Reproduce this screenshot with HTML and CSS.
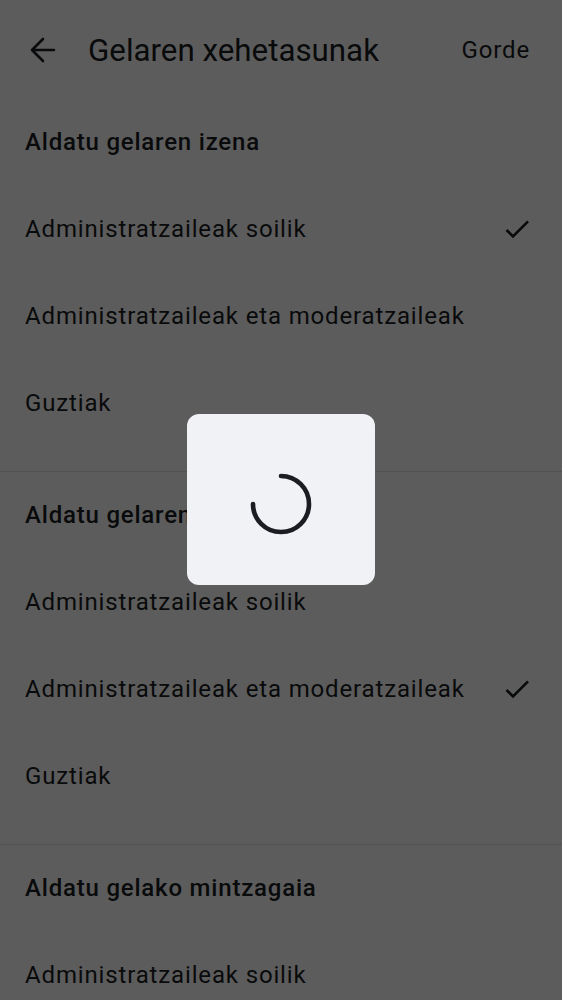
FILE: index.html
```html
<!DOCTYPE html>
<html lang="eu">
<head>
<meta charset="utf-8">
<title>Gelaren xehetasunak</title>
<link rel="stylesheet" href="styles.css">
</head>
<body>
<div class="page">
  <header class="appbar">
    <button class="back" aria-label="Atzera">
      <svg width="28" height="28" viewBox="0 0 28 28" fill="none" stroke="#1b1d22" stroke-width="2.6" stroke-linecap="round" stroke-linejoin="round"><path d="M25 14H3M14 3L3 14l11 11"/></svg>
    </button>
    <h1 class="title">Gelaren xehetasunak</h1>
    <span class="save">Gorde</span>
  </header>

  <section class="section">
    <div class="sec-head">Aldatu gelaren izena</div>
    <div class="item"><span>Administratzaileak soilik</span><svg class="check" width="32" height="32" viewBox="0 0 24 24"><path fill="#1b1d22" d="M9 16.17L4.83 12l-1.42 1.41L9 19 21 7l-1.41-1.41z"/></svg></div>
    <div class="item"><span>Administratzaileak eta moderatzaileak</span></div>
    <div class="item"><span>Guztiak</span></div>
  </section>
  <section class="section">
    <div class="sec-head">Aldatu gelaren irudia</div>
    <div class="item"><span>Administratzaileak soilik</span></div>
    <div class="item"><span>Administratzaileak eta moderatzaileak</span><svg class="check" width="32" height="32" viewBox="0 0 24 24"><path fill="#1b1d22" d="M9 16.17L4.83 12l-1.42 1.41L9 19 21 7l-1.41-1.41z"/></svg></div>
    <div class="item"><span>Guztiak</span></div>
  </section>
  <section class="section">
    <div class="sec-head">Aldatu gelako mintzagaia</div>
    <div class="item"><span>Administratzaileak soilik</span></div>
    <div class="item"><span>Administratzaileak eta moderatzaileak</span></div>
    <div class="item"><span>Guztiak</span></div>
  </section>
</div>

<div class="scrim"></div>
<div class="progress" role="progressbar" aria-label="Kargatzen">
  <svg width="70" height="70" viewBox="0 0 70 70"><path d="M35 7 A28 28 0 1 1 7 35" fill="none" stroke="#1b1d22" stroke-width="4.6" stroke-linecap="round"/></svg>
</div>
</body>
</html>
```

FILE: styles.css
```css
* { box-sizing: border-box; }
html, body { margin: 0; padding: 0; }
body {
  background: #ffffff;
  font-family: Roboto, "Noto Sans", "Liberation Sans", sans-serif;
  color: #1b1d22;
  width: 562px;
  height: 1000px;
  overflow: hidden;
}
.page { width: 562px; }
.appbar {
  height: 99px;
  display: flex;
  align-items: center;
  padding: 1px 32px 0 29px;
}
.back {
  width: 28px;
  height: 28px;
  padding: 0;
  border: 0;
  background: none;
  display: flex;
  align-items: center;
  justify-content: center;
}
.title {
  margin: 0 0 0 31px;
  font-size: 31.3px;
  font-weight: 400;
  flex: 1;
  letter-spacing: 0;
}
.save {
  font-size: 24px;
  font-weight: 400;
  letter-spacing: 0.85px;
}
.section {
  border-bottom: 1px solid #e3e3e6;
  padding-bottom: 25px;
}
.sec-head {
  height: 86px;
  display: flex;
  align-items: center;
  padding-left: 25px;
  font-size: 24px;
  font-weight: 500;
  letter-spacing: 0.8px;
}
.item {
  height: 87px;
  display: flex;
  align-items: center;
  justify-content: space-between;
  padding: 0 29px 0 25px;
  font-size: 24px;
  font-weight: 400;
  letter-spacing: 0.85px;
}
.check { flex: none; }
.scrim {
  position: fixed;
  inset: 0;
  background: rgba(0, 0, 0, 0.64);
}
.progress {
  position: fixed;
  left: 187px;
  top: 414px;
  width: 188px;
  height: 171px;
  border-radius: 12px;
  background: #f1f2f6;
  display: flex;
  align-items: center;
  justify-content: center;
}
.progress svg { margin-top: 9px; }
```
